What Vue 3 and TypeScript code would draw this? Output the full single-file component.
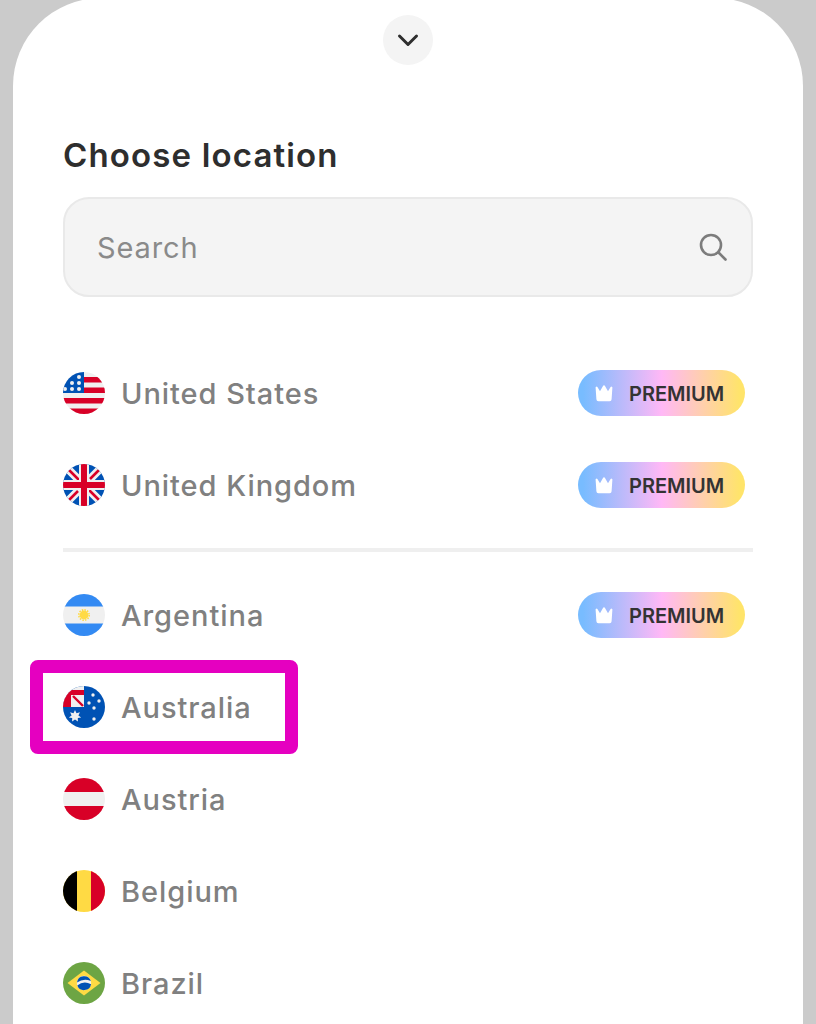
<script setup lang="ts">
interface Country {
  name: string;
  flag: string;
  premium?: boolean;
  marked?: boolean;
}

const pinned: Country[] = [
  { name: 'United States', flag: 'us', premium: true },
  { name: 'United Kingdom', flag: 'uk', premium: true },
];

const countries: Country[] = [
  { name: 'Argentina', flag: 'ar', premium: true },
  { name: 'Australia', flag: 'au', marked: true },
  { name: 'Austria', flag: 'at' },
  { name: 'Belgium', flag: 'be' },
  { name: 'Brazil', flag: 'br' },
];

const usStars = [[16, 5], [9, 11], [16, 11], [9, 17], [16, 17], [2, 17]];
const auStars = [[30, 9], [36, 15], [26, 17], [31, 22], [31, 33]];
</script>

<template>
  <div class="screen">
    <div class="sheet">
      <div class="handle">
        <button class="collapse">
          <svg width="26" height="26" viewBox="0 0 26 26" fill="none">
            <path d="M4.500 9 13 17.500 21.500 9" stroke="#2e2e2e" stroke-width="3" stroke-linecap="round" stroke-linejoin="round" />
          </svg>
        </button>
      </div>

      <h1 class="title">Choose location</h1>

      <div class="search">
        <span class="placeholder">Search</span>
        <svg width="30" height="30" viewBox="0 0 30 30" fill="none">
          <circle cx="13" cy="13" r="10" stroke="#7c7c7c" stroke-width="2.600" />
          <path d="m20.500 20.500 7 7" stroke="#7c7c7c" stroke-width="2.600" stroke-linecap="round" />
        </svg>
      </div>

      <div class="groups">
        <div v-for="(group, i) in [pinned, countries]" :key="i" class="group">
          <div v-for="c in group" :key="c.name" class="row">
            <div v-if="c.marked" class="marker"></div>
            <svg class="flag" width="42" height="42" viewBox="0 0 42 42">
              <defs>
                <clipPath :id="'clip-' + c.flag"><circle cx="21" cy="21" r="21" /></clipPath>
              </defs>
              <g :clip-path="'url(#clip-' + c.flag + ')'">
                <template v-if="c.flag === 'us'">
                  <rect width="42" height="42" fill="#f0f0f0" />
                  <rect x="20" y="5" width="22" height="5.500" fill="#d80027" />
                  <rect x="20" y="15.500" width="22" height="5.500" fill="#d80027" />
                  <rect y="26" width="42" height="5.500" fill="#d80027" />
                  <rect y="36.500" width="42" height="5.500" fill="#d80027" />
                  <rect width="21" height="21" fill="#0052b4" />
                  <circle v-for="(s, k) in usStars" :key="k" :cx="s[0]" :cy="s[1]" r="2" fill="#f0f0f0" />
                </template>
                <template v-else-if="c.flag === 'uk'">
                  <rect width="42" height="42" fill="#0052b4" />
                  <path d="M0 0 42 42M42 0 0 42" stroke="#f0f0f0" stroke-width="8" />
                  <path d="M6 6 17 17M25 25 36 36M36 6 27 15M15 27 6 36" stroke="#d80027" stroke-width="2.600" />
                  <rect x="16" width="10" height="42" fill="#f0f0f0" />
                  <rect y="16" width="42" height="10" fill="#f0f0f0" />
                  <rect x="18" width="6" height="42" fill="#d80027" />
                  <rect y="18" width="42" height="6" fill="#d80027" />
                </template>
                <template v-else-if="c.flag === 'ar'">
                  <rect width="42" height="42" fill="#f0f0f0" />
                  <rect width="42" height="12.500" fill="#338af3" />
                  <rect y="29.500" width="42" height="12.500" fill="#338af3" />
                  <circle cx="21" cy="21" r="4.400" fill="#ffda44" />
                  <circle cx="21" cy="21" r="5.200" fill="none" stroke="#ffda44" stroke-width="1.600" stroke-dasharray="1.500 1.200" />
                </template>
                <template v-else-if="c.flag === 'au'">
                  <rect width="42" height="42" fill="#0052b4" />
                  <rect width="21" height="21" fill="#f0f0f0" />
                  <path d="M0 4h21v5H8v12H0z" fill="#d80027" />
                  <path d="M10 10 20 20" stroke="#d80027" stroke-width="2.400" />
                  <circle v-for="(s, k) in auStars" :key="k" :cx="s[0]" :cy="s[1]" r="1.700" fill="#f0f0f0" />
                  <path d="m12 24 1.500 3.200 3.400-.9-1.500 3.200 2.800 2-3.400.6.1 3.500-2.900-2.200-2.900 2.200.1-3.500-3.400-.6 2.800-2-1.500-3.200 3.400.9z" fill="#f0f0f0" />
                </template>
                <template v-else-if="c.flag === 'at'">
                  <rect width="42" height="42" fill="#f0f0f0" />
                  <rect width="42" height="14" fill="#d80027" />
                  <rect y="28" width="42" height="14" fill="#d80027" />
                </template>
                <template v-else-if="c.flag === 'be'">
                  <rect width="42" height="42" fill="#ffda44" />
                  <rect width="14" height="42" fill="#000" />
                  <rect x="28" width="14" height="42" fill="#d80027" />
                </template>
                <template v-else>
                  <rect width="42" height="42" fill="#6da544" />
                  <path d="M21 8.500 37.500 21 21 33.500 4.500 21z" fill="#ffda44" />
                  <circle cx="21" cy="21" r="7.200" fill="#f0f0f0" />
                  <path d="M14 20.400a7.200 7.200 0 0 1 13.900-1.500 15 15 0 0 0-13.900 1.500zM14.300 23.500a12 12 0 0 1 13.800-1.200 7.200 7.200 0 0 1-13.800 1.200z" fill="#0052b4" />
                </template>
              </g>
            </svg>
            <span class="name">{{ c.name }}</span>
            <div v-if="c.premium" class="badge">
              <svg width="18" height="17" viewBox="0 0 18 17">
                <path d="M.6 2.600a1 1 0 0 1 1.800-.6L5 6.200 8 .9a1.100 1.100 0 0 1 2 0l3 5.300L15.600 2a1 1 0 0 1 1.800.6l-.8 11.700a2 2 0 0 1-2 1.900H3.400a2 2 0 0 1-2-1.900z" fill="#fff" />
              </svg>
              <span class="badge-label">PREMIUM</span>
            </div>
          </div>
        </div>
      </div>
    </div>
  </div>
</template>

<style scoped>
.screen {
  height: 1024px;
  overflow: hidden;
  background: #cbcbcb;
  padding: 0 13px;
  box-sizing: border-box;
  font-family: Inter, "Open Sans", sans-serif;
}

.sheet {
  height: 1100px;
  margin-top: -2px;
  background: #fff;
  border-radius: 88px 88px 0 0;
  padding: 17px 50px 0;
}

.handle {
  display: flex;
  justify-content: center;
}

.collapse {
  width: 50px;
  height: 50px;
  padding: 0;
  border: none;
  border-radius: 50%;
  background: #f4f4f4;
  display: flex;
  align-items: center;
  justify-content: center;
}

.title {
  margin: 66px 0 0;
  font-size: 33px;
  line-height: 48px;
  font-weight: 600;
  color: #2e2e2e;
  letter-spacing: 1.150px;
}

.search {
  margin-top: 18px;
  height: 100px;
  box-sizing: border-box;
  border: 2px solid #e9e9e9;
  border-radius: 26px;
  background: #f4f4f4;
  display: flex;
  align-items: center;
  justify-content: space-between;
  padding: 0 23px 0 32px;
}

.placeholder {
  font-size: 29px;
  color: #8a8a8a;
  letter-spacing: 0.900px;
}

.groups {
  margin-top: 50px;
}

.group {
  padding-bottom: 17px;
}

.group + .group {
  border-top: 4px solid #efefef;
  padding-top: 17px;
}

.row {
  position: relative;
  height: 92px;
  display: flex;
  align-items: center;
  gap: 16px;
  padding-right: 8px;
}

.flag {
  flex: none;
}

.name {
  font-size: 29px;
  font-weight: 500;
  color: #808080;
  letter-spacing: 0.950px;
}

.badge {
  margin-left: auto;
  width: 167px;
  height: 46px;
  box-sizing: border-box;
  border-radius: 23px;
  background: linear-gradient(90deg, #78bcff 3%, #ffb8f6 50%, #ffe46a 97%);
  display: flex;
  align-items: center;
  gap: 16px;
  padding-left: 17px;
  font-size: 20px;
  font-weight: 600;
  color: #333;
}

.badge-label {
  padding-top: 2px;
}

.marker {
  position: absolute;
  left: -33px;
  top: -1px;
  width: 268px;
  height: 94px;
  box-sizing: border-box;
  border: 13px solid #e500c0;
  border-radius: 8px;
}
</style>

<style>
html,
body {
  margin: 0;
  background: #cbcbcb;
}
</style>
